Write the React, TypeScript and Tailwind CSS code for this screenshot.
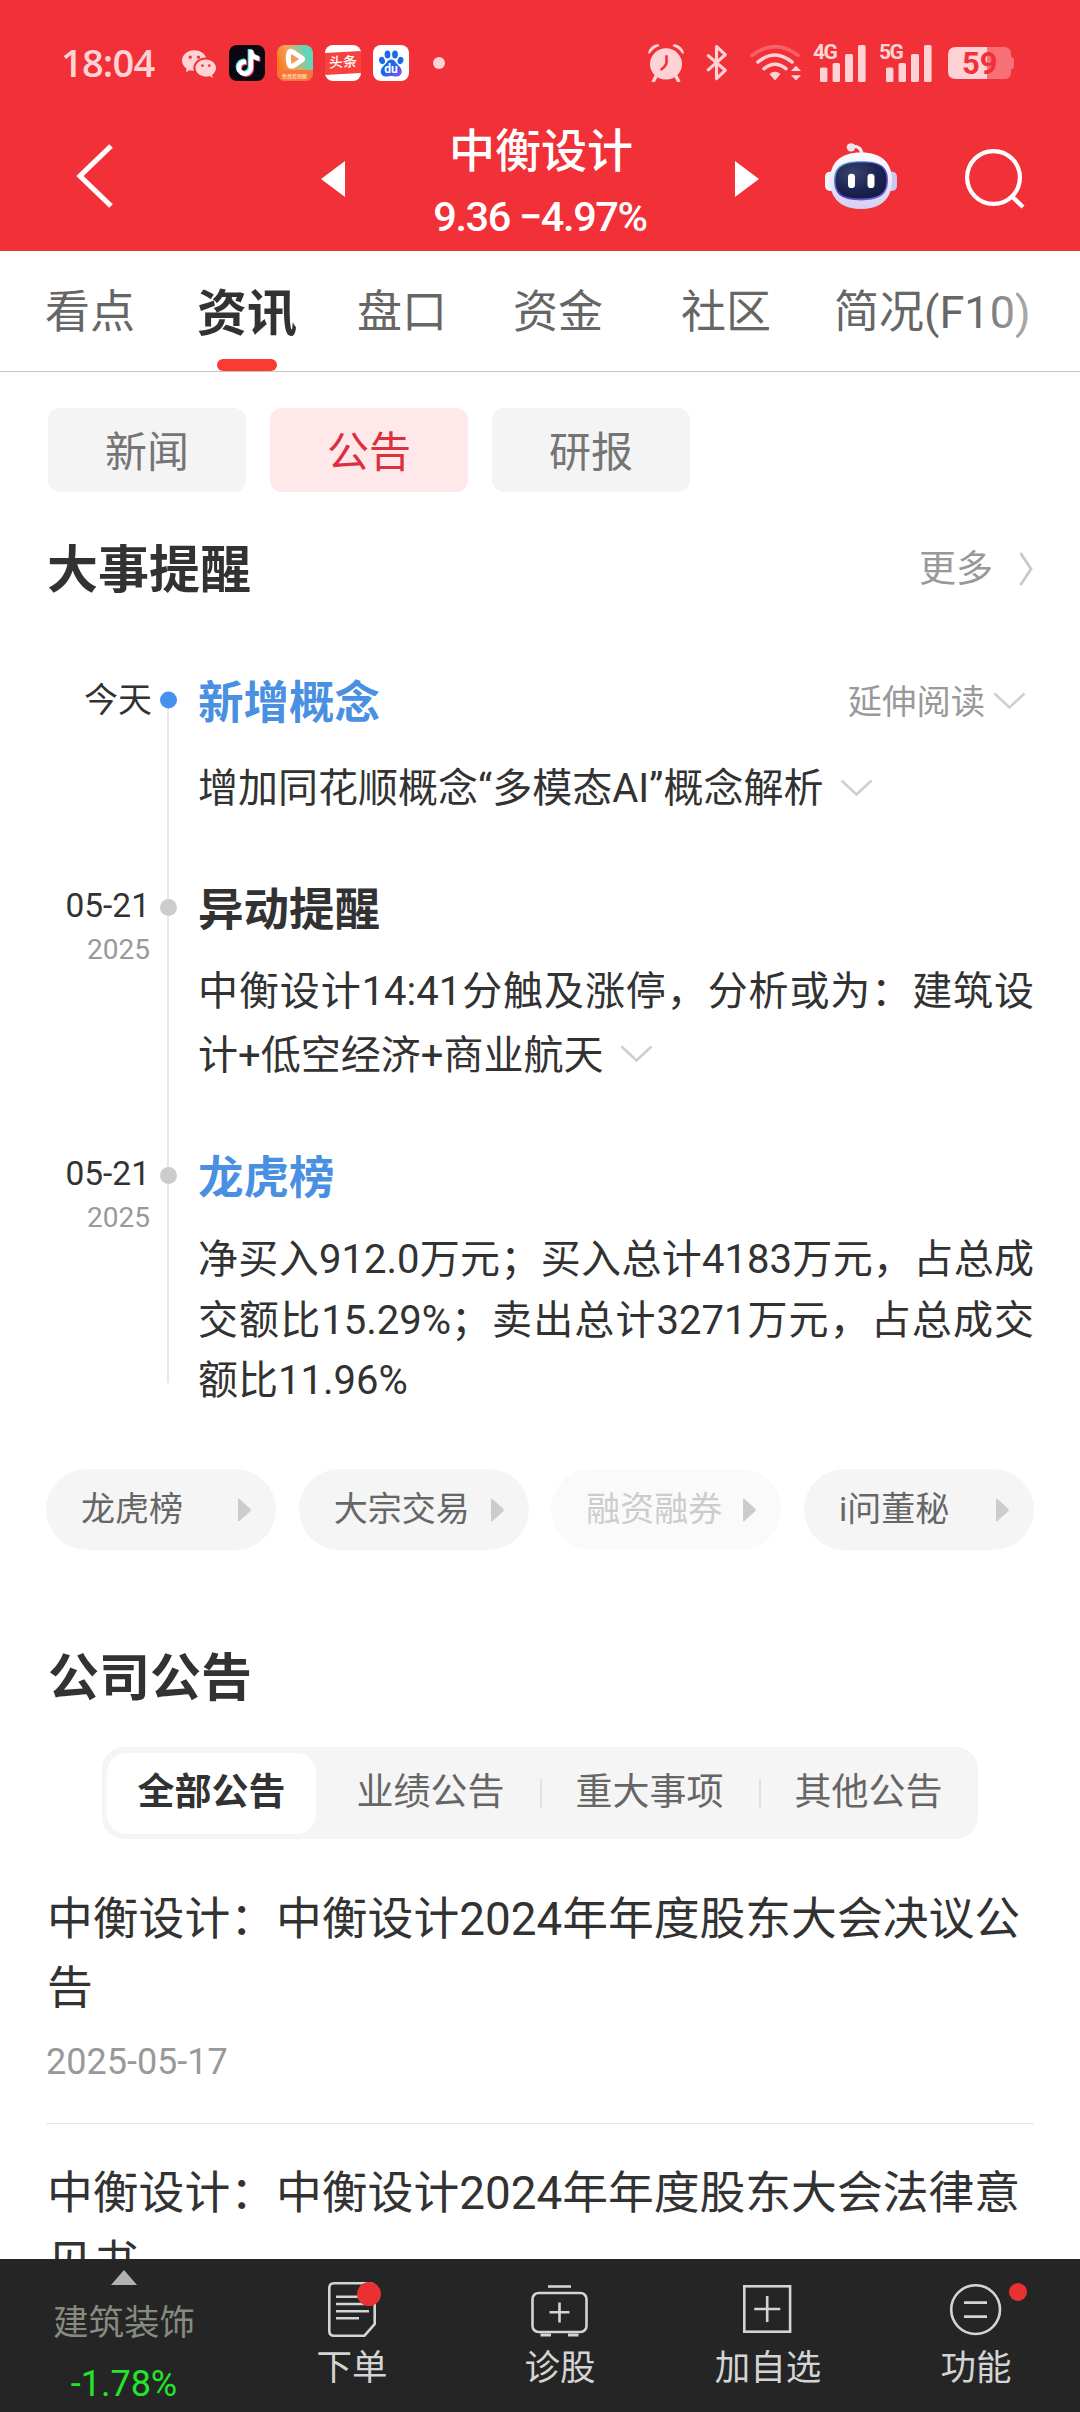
import React from "react";
import { BsWechat } from "react-icons/bs";
import { FaTiktok } from "react-icons/fa";

const tabs = [
  { label: "看点", cls: "ml-[45px]" },
  { label: "资讯", cls: "ml-[62px]", active: true },
  { label: "盘口", cls: "ml-[60px]" },
  { label: "资金", cls: "ml-[66px]" },
  { label: "社区", cls: "ml-[78px]" },
  { label: "简况(F10)", cls: "ml-[63px]" },
];

const links = [
  { label: "龙虎榜" },
  { label: "大宗交易" },
  { label: "融资融券", disabled: true },
  { label: "i问董秘" },
];

const segments = ["全部公告", "业绩公告", "重大事项", "其他公告"];

function ChevronDown({ className = "" }: { className?: string }) {
  return (
    <svg className={className} width="33" height="18" viewBox="0 0 33 18" fill="none">
      <path d="M1.500 1.500 L16.500 15.500 L31.500 1.500" stroke="#cfcfcf" strokeWidth="2.600" />
    </svg>
  );
}

function Signal({ label }: { label: string }) {
  return (
    <div className="relative h-[38px] w-[52px]">
      <span className="absolute -left-[1px] top-0 text-[21px] leading-[17px] font-bold tracking-[-1.500px]">{label}</span>
      <svg className="absolute left-0 top-0" width="52" height="38" viewBox="0 0 52 38" fill="#ffd3d6">
        <rect x="6" y="23.500" width="7.400" height="14.500" rx="1.600" />
        <rect x="18.600" y="19" width="7.400" height="19" rx="1.600" />
        <rect x="31" y="10" width="8" height="28" rx="1.600" />
        <rect x="44" y="1" width="7.600" height="37" rx="1.600" />
      </svg>
    </div>
  );
}

function StatusBar() {
  return (
    <div className="flex h-[125px] items-center pl-[61px] pr-[66px] text-[#ffd3d6]">
      <span
        className="w-[121px] pb-[2px] text-[38px] leading-[44px] font-semibold tracking-[-0.800px]"
        style={{ fontFamily: '"Open Sans", Roboto, sans-serif' }}
      >
        18:04
      </span>
      <BsWechat className="size-[34px]" />
      <div className="relative ml-[13px] size-[36px] rounded-[8px] bg-[#0b0812]">
        <FaTiktok className="absolute left-[5px] top-[4px] size-[26px] text-[#3fe6e3]" />
        <FaTiktok className="absolute left-[7px] top-[6px] size-[26px] text-[#f4486c]" />
        <FaTiktok className="absolute left-[6px] top-[5px] size-[26px] text-white" />
      </div>
      <div className="relative ml-[12px] size-[36px] overflow-hidden rounded-[8px] bg-[linear-gradient(70deg,#f87a1c_15%,#f2a45e_45%,#5fd6b8_80%)]">
        <div className="absolute inset-x-0 bottom-0 h-[11px] bg-[#f9743a]" />
        <svg className="absolute left-[6px] top-[2px]" width="24" height="24" viewBox="0 0 24 24">
          <path d="M9 4.500 L19 11 Q20.500 12 19 13 L10 19 Q7 20 6 17 Q4.500 11 6 6 Q7 3.800 9 4.500Z" fill="#f59a50" stroke="#fff" strokeWidth="5" strokeLinejoin="round" />
        </svg>
        <span className="absolute left-[5px] top-[28px] text-[5px] leading-[6px] font-medium whitespace-nowrap text-[#ffe2b8]">免费看短剧</span>
      </div>
      <div className="relative ml-[12px] size-[36px] overflow-hidden rounded-[8px] bg-white">
        <div className="absolute inset-x-0 top-[7px] h-[22px] -skew-y-3 bg-[#f5423f] text-center text-[14px] leading-[21px] font-medium text-white">
          头条
        </div>
      </div>
      <div className="relative ml-[12px] size-[36px] rounded-[8px] bg-white">
        <svg className="absolute inset-0" width="36" height="36" viewBox="0 0 36 36">
          <defs>
            <linearGradient id="paw" x1="0" y1="0" x2="1" y2="1">
              <stop offset="0.5" stopColor="#1c68e8" />
              <stop offset="1" stopColor="#9a4cf0" />
            </linearGradient>
          </defs>
          <g fill="#1c68e8">
            <ellipse cx="9" cy="15.500" rx="2.900" ry="3.700" transform="rotate(-15 9 15.500)" />
            <ellipse cx="14.500" cy="9.500" rx="2.900" ry="4" />
            <ellipse cx="22" cy="9.500" rx="2.900" ry="4" />
            <ellipse cx="27.500" cy="15.500" rx="2.900" ry="3.700" transform="rotate(15 27.500 15.500)" />
          </g>
          <path
            d="M18.200 14.500 C22 14.500 22.500 18 26 21 C31 25.500 28.500 31.500 24 31.500 C21 31.500 20 31 18.200 31 C16.500 31 15.500 31.500 12.500 31.500 C8 31.500 5.500 25.500 10.500 21 C14 18 14.500 14.500 18.200 14.500Z"
            fill="url(#paw)"
          />
        </svg>
        <span className="absolute inset-x-0 top-[18px] text-center text-[12px] leading-[13px] font-bold text-white">du</span>
      </div>
      <div className="ml-[24px] size-[12px] rounded-full bg-[#ffd3d6]" />

      <div className="ml-auto flex items-center">
        <svg width="38" height="39" viewBox="0 0 38 40" preserveAspectRatio="none" fill="#ffd3d6">
          <path d="M1 10.500 A11 11 0 0 1 11 1 L12.500 3 A20 20 0 0 0 2.500 11Z" />
          <path d="M37 10.500 A11 11 0 0 0 27 1 L25.500 3 A20 20 0 0 1 35.500 11Z" />
          <circle cx="19" cy="21.500" r="16" />
          <path d="M9 34 L6.500 39 M29 34 L31.500 39" stroke="#ffd3d6" strokeWidth="3.500" strokeLinecap="round" />
          <path d="M19.500 13.500 V20 Q19 23.500 14.500 27" stroke="#f13038" strokeWidth="2.600" fill="none" strokeLinecap="round" />
        </svg>
        <svg
          className="ml-[21px]"
          width="22"
          height="37"
          viewBox="0 0 22 38"
          fill="none"
          stroke="#ffd3d6"
          strokeWidth="3.200"
          strokeLinejoin="round"
          strokeLinecap="round"
        >
          <path d="M2 12 L19.500 27 L10.500 35.500 V2.500 L19.500 11 L2 26.500" />
        </svg>
        <svg className="ml-[22px]" width="52" height="38" viewBox="0 0 52 40" preserveAspectRatio="none" fill="none" strokeLinecap="round" strokeWidth="3.600">
          <path d="M2 12 Q25 -6.500 48 12" stroke="#f6626a" />
          <path d="M8 19 Q25 4 42 19" stroke="#ffd3d6" />
          <path d="M14 26 Q25 16.500 36 26" stroke="#ffd3d6" />
          <path d="M19.500 31.500 Q25 27 30.500 31.500 L25 38.500Z" fill="#ffd3d6" />
          <path d="M41 28.500 L46 23 L51 28.500Z M41 33 L46 38.500 L51 33Z" fill="#ffd3d6" />
        </svg>
        <div className="ml-[12px]">
          <Signal label="4G" />
        </div>
        <div className="ml-[14px]">
          <Signal label="5G" />
        </div>
        <div className="relative ml-[16px] h-[34px] w-[66px]">
          <svg width="66" height="34" viewBox="0 0 66 36" preserveAspectRatio="none">
            <path d="M39 1 H56 Q63 1 63 8 V11 Q66 12 66 14.500 V22 Q66 24 63 25 V28 Q63 35 56 35 H39Z" fill="#f77078" />
            <path d="M39 1 H8 Q0 1 0 9 V27 Q0 35 8 35 H39Z" fill="#ffd3d6" />
          </svg>
          <span className="absolute left-[14px] top-[2px] text-[31px] leading-[31px] font-bold text-[#f13038]">59</span>
        </div>
      </div>
    </div>
  );
}

function Robot() {
  return (
    <svg width="74" height="69" viewBox="0 0 74 72" preserveAspectRatio="none">
      <defs>
        <linearGradient id="shell" x1="0" y1="0" x2="0" y2="1">
          <stop offset="0" stopColor="#ffffff" />
          <stop offset="0.55" stopColor="#e8e6fb" />
          <stop offset="1" stopColor="#d3cff2" />
        </linearGradient>
        <linearGradient id="visor" x1="0" y1="0" x2="1" y2="1">
          <stop offset="0" stopColor="#5cc4e8" />
          <stop offset="0.5" stopColor="#5a3fc8" />
          <stop offset="1" stopColor="#8b6cf0" />
        </linearGradient>
        <radialGradient id="glass" cx="0.35" cy="0.3" r="0.8">
          <stop offset="0" stopColor="#39456e" />
          <stop offset="0.6" stopColor="#1b2450" />
          <stop offset="1" stopColor="#141c42" />
        </radialGradient>
      </defs>
      <path d="M27 5 Q37 3 38 13" fill="none" stroke="#efeafa" strokeWidth="3.400" />
      <circle cx="27" cy="5.500" r="4.300" fill="#f3e3f2" />
      <rect x="1" y="31" width="12" height="20" rx="5" fill="#f2f2fd" />
      <rect x="61" y="31" width="12" height="20" rx="5" fill="#cdc8f0" />
      <path d="M37 11 C58 11 68 22 68 40 C68 60 56 70 37 70 C18 70 6 60 6 40 C6 22 16 11 37 11Z" fill="url(#shell)" />
      <path d="M37 20 C57 20 64 26 64 40 C64 55 56 61 37 61 C18 61 10 55 10 40 C10 26 17 20 37 20Z" fill="url(#visor)" />
      <path d="M37 21.500 C56 21.500 62.500 27 62.500 40 C62.500 54 55 59 37 59 C19 59 11.500 54 11.500 40 C11.500 27 18 21.500 37 21.500Z" fill="url(#glass)" />
      <rect x="24" y="33" width="7" height="15" rx="3.500" fill="#fff" />
      <rect x="43.500" y="33" width="7" height="15" rx="3.500" fill="#fff" />
    </svg>
  );
}

function Header() {
  return (
    <header className="h-[251px] shrink-0 bg-[#f13038] text-white">
      <StatusBar />
      <div className="flex h-[126px]">
        <svg className="ml-[76px] mt-[19px]" width="38" height="64" viewBox="0 0 38 64" fill="none">
          <path d="M35 2 L4 32 L35 62" stroke="#fff" strokeWidth="5.200" />
        </svg>
        <svg className="ml-[207px] mt-[36px]" width="24" height="36" viewBox="0 0 24 36" fill="#fff">
          <path d="M24 0 V36 L0 18Z" />
        </svg>
        <div className="flex w-[390px] flex-col items-center text-center">
          <div className="mt-[1px] pl-[2px] text-[46px] leading-[50px] font-medium">中衡设计</div>
          <div className="mt-[20px] text-[41.500px] leading-[42px] font-medium tracking-[-1.400px] whitespace-nowrap">9.36 −4.97%</div>
        </div>
        <svg className="mt-[36px]" width="24" height="36" viewBox="0 0 24 36" fill="#fff">
          <path d="M0 0 V36 L24 18Z" />
        </svg>
        <div className="ml-[65px] mt-[17px]">
          <Robot />
        </div>
        <svg className="ml-[67px] mt-[21px]" width="62" height="64" viewBox="0 0 62 64" fill="none" stroke="#fff">
          <circle cx="28.500" cy="31.500" r="26.400" strokeWidth="4.200" />
          <path d="M46.500 50 L58 61" strokeWidth="4.400" />
        </svg>
      </div>
    </header>
  );
}

function Tabs() {
  return (
    <nav className="relative flex h-[121px] shrink-0 items-stretch border-b border-[#c4c4c4]">
      {tabs.map((t) => (
        <div key={t.label} className={`relative flex items-center whitespace-nowrap ${t.cls}`}>
          {t.active ? (
            <>
              <span className="mt-[6px] text-[50px] leading-[60px] font-bold text-[#323232]">{t.label}</span>
              <span className="absolute bottom-0 left-1/2 h-[12px] w-[60px] -translate-x-1/2 rounded-[6px] bg-[#fa3b31]" />
            </>
          ) : (
            <span className="mt-[4px] text-[45px] leading-[60px] text-[#666]">{t.label}</span>
          )}
        </div>
      ))}
      <div className="absolute right-0 top-0 h-[120px] w-[105px] bg-linear-to-r from-white/0 to-white/90" />
    </nav>
  );
}

type ItemProps = {
  date: string;
  year?: string;
  title: string;
  titleClass: string;
  dotClass: string;
  railClass: string;
  className: string;
  aside?: React.ReactNode;
  children: React.ReactNode;
};

function TimelineItem({ date, year, title, titleClass, dotClass, railClass, className, aside, children }: ItemProps) {
  return (
    <div className={`flex ${className}`}>
      <div className={`w-[104px] text-right whitespace-nowrap ${year ? "pt-[6px]" : "pt-[8px]"}`}>
        <div className={`leading-[45px] text-[#323232] ${year ? "text-[33.500px]" : "-mr-[2px] text-[34px]"}`}>{date}</div>
        {year && <div className="text-[28px] leading-[43px] text-[#999]">{year}</div>}
      </div>
      <div className={`relative ml-[17px] w-[2px] bg-[#e8e8e8] ${railClass}`}>
        <span className={`absolute -left-[7.500px] size-[17px] rounded-full ${dotClass}`} />
      </div>
      <div className="ml-[29px] w-[836px]">
        <div className="flex h-[64px] items-center justify-between">
          <h3 className={`pt-[3px] text-[45.500px] leading-[60px] font-bold ${titleClass}`}>{title}</h3>
          {aside}
        </div>
        {children}
      </div>
    </div>
  );
}

function TabIcon({ kind }: { kind: string }) {
  const common = { width: 62, height: 62, viewBox: "0 0 62 62", fill: "none", stroke: "#d4d4d4", strokeWidth: 2.6 };
  if (kind === "order")
    return (
      <svg {...common}>
        <path d="M13 5.300 H49 Q53.700 5.300 53.700 10 V46 L43.500 57.700 H13 Q8.300 57.700 8.300 53 V10 Q8.300 5.300 13 5.300Z" />
        <path d="M15 18.700 H40 M15 26 H48 M15 33.300 H48 M15 40.300 H38" />
        <circle cx="48" cy="16" r="12" fill="#ea3131" stroke="none" />
      </svg>
    );
  if (kind === "diagnose")
    return (
      <svg {...common}>
        <path d="M19 8.500 H42" />
        <rect x="3.500" y="15" width="54" height="39" rx="6" />
        <path d="M30.500 24.500 V44.500 M20.500 34.300 H40.500" />
        <path d="M11.500 57 H22 M39 57 H49.500" strokeWidth="3.200" />
      </svg>
    );
  if (kind === "add")
    return (
      <svg {...common}>
        <rect x="7.300" y="8.300" width="45.800" height="45.400" />
        <path d="M30.200 18 V44 M17.200 31 H43.200" />
      </svg>
    );
  return (
    <svg {...common}>
      <circle cx="30.600" cy="31.600" r="24.400" />
      <path d="M19 24.600 H42 M19 38.600 H42" />
    </svg>
  );
}

const actions = [
  { kind: "order", label: "下单" },
  { kind: "diagnose", label: "诊股" },
  { kind: "add", label: "加自选" },
  { kind: "menu", label: "功能" },
];

function BottomBar() {
  return (
    <footer className="flex h-[153px] shrink-0 bg-[#252525]">
      <div className="flex w-[248px] flex-col items-center">
        <svg className="mt-[11px]" width="26" height="15" viewBox="0 0 26 15" fill="#b2b2b2">
          <path d="M13 0 L26 15 H0Z" />
        </svg>
        <div className="mt-[17px] text-[35.500px] leading-[42px] text-[#858b7f]">建筑装饰</div>
        <div className="mt-[19px] text-[36px] leading-[42px] text-[#22e62a]">-1.78%</div>
      </div>
      {actions.map((a) => (
        <div key={a.kind} className="relative flex w-[208px] flex-col items-center pt-[19px]">
          <TabIcon kind={a.kind} />
          <div className="mt-[7px] text-[35.500px] leading-[42px] text-[#d4d4d4]">{a.label}</div>
          {a.kind === "menu" && <span className="absolute left-[137px] top-[24px] size-[18px] rounded-full bg-[#ea3131]" />}
        </div>
      ))}
    </footer>
  );
}

export default function App() {
  return (
    <div
      className="flex h-[2412px] w-[1080px] flex-col overflow-hidden bg-white text-[#323232]"
      style={{ fontFamily: 'Roboto, "Noto Sans CJK SC", sans-serif' }}
      lang="zh-CN"
    >
      <Header />
      <Tabs />
      <main className="min-h-0 flex-1 overflow-hidden">
        <div className="mt-[36px] flex gap-[24px] pl-[48px]">
          {["新闻", "公告", "研报"].map((c) => (
            <div
              key={c}
              className={`flex h-[84px] w-[198px] items-center justify-center rounded-[12px] pt-[5px] text-[42px] ${
                c === "公告" ? "bg-[#ffe8ea] text-[#dc3040]" : "bg-[#f4f4f4] text-[#757575]"
              }`}
            >
              {c}
            </div>
          ))}
        </div>

        <div className="mt-[47px] flex h-[60px] items-center pl-[47px] pr-[47px]">
          <h2 className="pt-[4px] text-[51px] leading-[60px] font-bold">大事提醒</h2>
          <span className="ml-auto pt-[2px] text-[37px] leading-[44px] text-[#999]">更多</span>
          <svg className="ml-[26px]" width="14" height="34" viewBox="0 0 14 34" fill="none">
            <path d="M1.500 1 L12 17 L1.500 33" stroke="#c8c8c8" strokeWidth="2.800" />
          </svg>
        </div>

        <section className="mt-[71px] pl-[46px]">
          <TimelineItem
            date="今天"
            title="新增概念"
            titleClass="text-[#4a90e2]"
            dotClass="top-0 -translate-y-1/2 bg-[#4691ee]"
            railClass="mt-[30px]"
            className="h-[207px]"
            aside={
              <span className="mr-[8px] flex items-center text-[34.300px] leading-[44px] text-[#999]">
                延伸阅读
                <ChevronDown className="ml-[8px] mt-[-3px]" />
              </span>
            }
          >
            <p className="mt-[24px] flex items-center text-[40px] leading-[62px]">
              增加同花顺概念“多模态AI”概念解析
              <ChevronDown className="ml-[17px] mt-[-3px]" />
            </p>
          </TimelineItem>
          <TimelineItem
            date="05-21"
            year="2025"
            title="异动提醒"
            titleClass="text-[#323232]"
            dotClass="top-[22px] bg-[#ccc]"
            railClass=""
            className="h-[268px]"
          >
            <p className="mt-[19px] text-justify text-[40px] leading-[64px]">
              中衡设计14:41分触及涨停，分析或为：建筑设计+低空经济+商业航天
              <ChevronDown className="ml-[17px] inline-block align-[6px]" />
            </p>
          </TimelineItem>
          <TimelineItem
            date="05-21"
            year="2025"
            title="龙虎榜"
            titleClass="text-[#4a90e2]"
            dotClass="top-[22px] bg-[#ccc]"
            railClass="h-[238px]"
            className="h-[324px]"
          >
            <p className="mt-[21px] text-justify text-[40px] leading-[60.500px]">
              净买入912.0万元；买入总计4183万元，占总成交额比15.29%；卖出总计3271万元，占总成交额比11.96%
            </p>
          </TimelineItem>
        </section>

        <div className="flex justify-between px-[46px]">
          {links.map((l) => (
            <div
              key={l.label}
              className={`flex h-[81px] w-[230px] items-center justify-between rounded-full pl-[35px] pr-[25px] text-[34px] ${
                l.disabled ? "bg-[#fafafa] text-[#ccc]" : "bg-[#f5f5f5] text-[#666]"
              }`}
            >
              {l.label}
              <svg width="13" height="24" viewBox="0 0 13 26" preserveAspectRatio="none" fill="#ccc">
                <path d="M0 1.500 Q0 0 1.500 1 L12 11.500 Q13.500 13 12 14.500 L1.500 25 Q0 26 0 24.500Z" />
              </svg>
            </div>
          ))}
        </div>

        <h2 className="mt-[99px] pl-[48px] text-[51px] leading-[60px] font-bold">公司公告</h2>

        <div className="mx-auto mt-[38px] flex h-[92px] w-[876px] items-center rounded-[22px] bg-[#f5f5f5]">
          {segments.map((s, i) => (
            <div key={s} className="relative flex h-full w-[219px] items-center justify-center">
              {i > 1 && <span className="absolute left-0 h-[29px] w-[2px] bg-[#e2e2e2]" />}
              {i === 0 ? (
                <span className="flex h-[81px] w-[209px] items-center justify-center rounded-[20px] bg-white text-[37px] font-bold">{s}</span>
              ) : (
                <span className="text-[37px] text-[#666]">{s}</span>
              )}
            </div>
          ))}
        </div>

        <article className="mx-[46px] mt-[46px] h-[239px] border-b border-[#e6e6e6]">
          <h3 className="-mr-[10px] pl-[1px] text-[45.800px] leading-[69px]">中衡设计：中衡设计2024年年度股东大会决议公告</h3>
          <time className="mt-[17px] block text-[36px] leading-[44px] text-[#999]">2025-05-17</time>
        </article>
        <article className="mx-[46px] mt-[35px]">
          <h3 className="-mr-[10px] pl-[1px] text-[45.800px] leading-[69px]">中衡设计：中衡设计2024年年度股东大会法律意见书</h3>
        </article>
      </main>
      <BottomBar />
    </div>
  );
}
